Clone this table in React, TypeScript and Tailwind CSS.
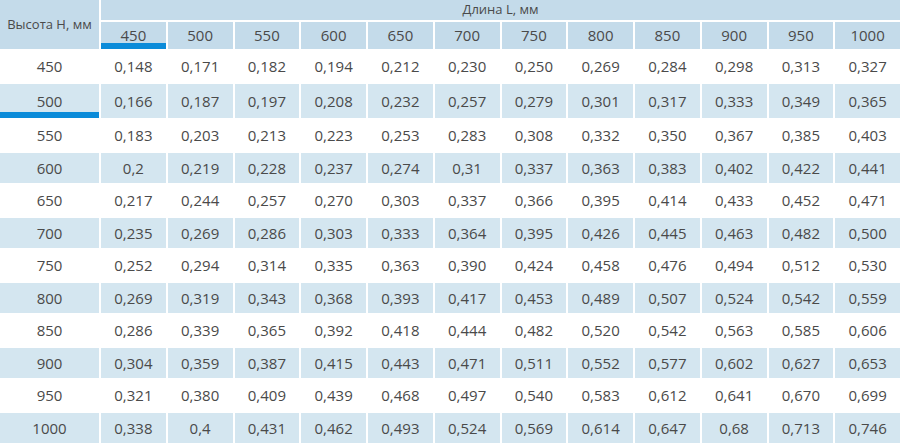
import React from 'react';

const lengths = [450, 500, 550, 600, 650, 700, 750, 800, 850, 900, 950, 1000];

const rows: [number, string[]][] = [
  [450, ['0,148', '0,171', '0,182', '0,194', '0,212', '0,230', '0,250', '0,269', '0,284', '0,298', '0,313', '0,327']],
  [500, ['0,166', '0,187', '0,197', '0,208', '0,232', '0,257', '0,279', '0,301', '0,317', '0,333', '0,349', '0,365']],
  [550, ['0,183', '0,203', '0,213', '0,223', '0,253', '0,283', '0,308', '0,332', '0,350', '0,367', '0,385', '0,403']],
  [600, ['0,2', '0,219', '0,228', '0,237', '0,274', '0,31', '0,337', '0,363', '0,383', '0,402', '0,422', '0,441']],
  [650, ['0,217', '0,244', '0,257', '0,270', '0,303', '0,337', '0,366', '0,395', '0,414', '0,433', '0,452', '0,471']],
  [700, ['0,235', '0,269', '0,286', '0,303', '0,333', '0,364', '0,395', '0,426', '0,445', '0,463', '0,482', '0,500']],
  [750, ['0,252', '0,294', '0,314', '0,335', '0,363', '0,390', '0,424', '0,458', '0,476', '0,494', '0,512', '0,530']],
  [800, ['0,269', '0,319', '0,343', '0,368', '0,393', '0,417', '0,453', '0,489', '0,507', '0,524', '0,542', '0,559']],
  [850, ['0,286', '0,339', '0,365', '0,392', '0,418', '0,444', '0,482', '0,520', '0,542', '0,563', '0,585', '0,606']],
  [900, ['0,304', '0,359', '0,387', '0,415', '0,443', '0,471', '0,511', '0,552', '0,577', '0,602', '0,627', '0,653']],
  [950, ['0,321', '0,380', '0,409', '0,439', '0,468', '0,497', '0,540', '0,583', '0,612', '0,641', '0,670', '0,699']],
  [1000, ['0,338', '0,4', '0,431', '0,462', '0,493', '0,524', '0,569', '0,614', '0,647', '0,68', '0,713', '0,746']],
];

export default function App() {
  return (
    <div className="h-[443px] w-[900px] overflow-hidden bg-white font-['Open_Sans',sans-serif] text-[#4a4a4a]">
      <div className="grid h-full grid-cols-[99px_repeat(12,1fr)] grid-rows-[20px_27px_repeat(12,1fr)] gap-[2px] text-[15px]">
        {/* header */}
        <div className="row-span-2 flex items-center justify-center bg-[#c4dbea] text-[13px]">
          Высота Н, мм
        </div>
        <div className="col-span-12 flex items-center justify-center bg-[#c4dbea] text-[13px]">
          Длина L, мм
        </div>
        {lengths.map((l, i) => (
          <div
            key={l}
            className={
              i === 0
                ? 'flex items-center justify-center border-b-[6px] border-[#0b8bd9] bg-[#c4dbea] pt-[6px]'
                : 'flex items-center justify-center bg-[#c4dbea]'
            }
          >
            {l}
          </div>
        ))}

        {/* body */}
        {rows.map(([h, vals], r) => {
          const striped = r % 2 === 1;
          const bg = striped ? 'bg-[#d4e6f0]' : 'bg-white';
          return (
            <React.Fragment key={h}>
              <div
                className={
                  h === 500
                    ? `flex items-center justify-center border-b-[6px] border-[#0b8bd9] pt-[6px] ${bg}`
                    : `flex items-center justify-center ${bg}`
                }
              >
                {h}
              </div>
              {vals.map((v, c) => (
                <div key={c} className={`flex items-center justify-center ${bg}`}>
                  {v}
                </div>
              ))}
            </React.Fragment>
          );
        })}
      </div>
    </div>
  );
}
